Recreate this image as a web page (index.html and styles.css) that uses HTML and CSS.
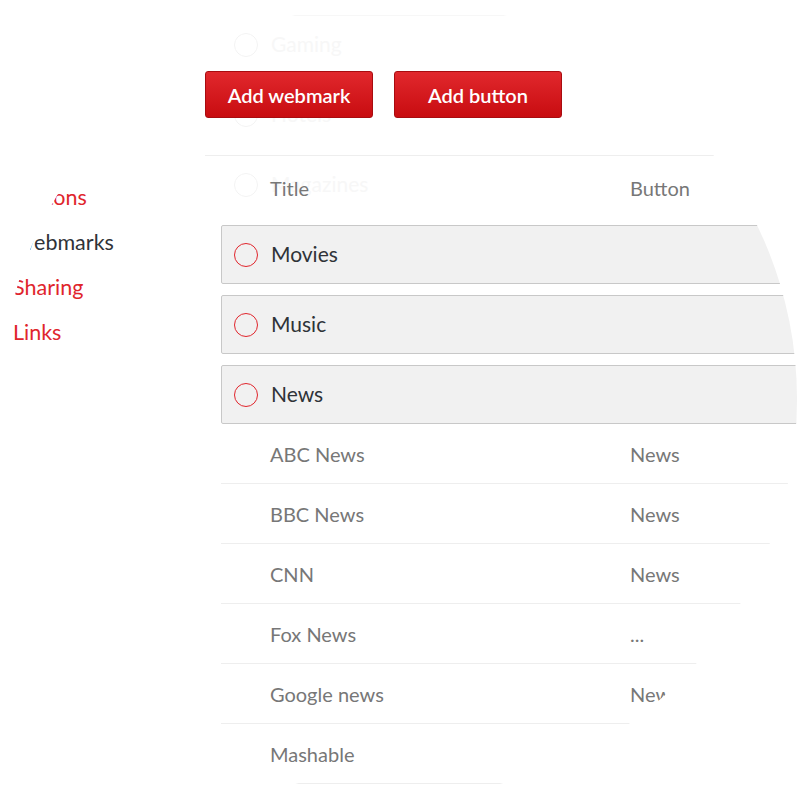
FILE: index.html
```html
<!DOCTYPE html>
<html lang="en">
<head>
    <meta charset="UTF-8">
    <meta name="viewport" content="width=device-width, initial-scale=1.0">
    <title>Webmarks</title>
    <link rel="stylesheet" href="styles.css">
</head>
<body>
    <div class="lens">
        <!-- side menu -->
        <nav class="side-nav">
            <a href="#" class="nav-link">Buttons</a>
            <a href="#" class="nav-link active">Webmarks</a>
            <a href="#" class="nav-link">Sharing</a>
            <a href="#" class="nav-link">Links</a>
        </nav>

        <div class="content">
            <div class="toolbar">
                <div class="toolbar-buttons">
                    <button class="red-btn">Add webmark</button>
                    <button class="red-btn">Add button</button>
                </div>
                <div class="table-head">
                    <span class="col-title">Title</span>
                    <span class="col-button">Button</span>
                </div>
            </div>

            <ul class="categories">
                <li class="category faded"><span class="radio"></span>Gaming</li>
                <li class="category faded"><span class="radio"></span>Hotels</li>
                <li class="category faded"><span class="radio"></span>Magazines</li>
                <li class="category"><span class="radio"></span>Movies</li>
                <li class="category"><span class="radio"></span>Music</li>
                <li class="category"><span class="radio"></span>News</li>
            </ul>

            <ul class="webmarks">
                <li class="webmark"><span class="col-title">ABC News</span><span class="col-button">News</span></li>
                <li class="webmark"><span class="col-title">BBC News</span><span class="col-button">News</span></li>
                <li class="webmark"><span class="col-title">CNN</span><span class="col-button">News</span></li>
                <li class="webmark"><span class="col-title">Fox News</span><span class="col-button">...</span></li>
                <li class="webmark"><span class="col-title">Google news</span><span class="col-button">News</span></li>
                <li class="webmark"><span class="col-title">Mashable</span><span class="col-button"></span></li>
            </ul>
        </div>
    </div>
</body>
</html>
```

FILE: styles.css
```css
* {
    margin: 0;
    padding: 0;
    box-sizing: border-box;
}

body {
    font-family: 'Source Sans Pro', Lato, 'Noto Sans', sans-serif;
    background: white;
    color: #333;
}

.lens {
    width: 798px;
    height: 798px;
    display: flex;
    overflow: hidden;
    background: white;
    clip-path: circle(398px at 399px 399px);
}

/* side menu */
.side-nav {
    width: 205px;
    flex-shrink: 0;
    padding-top: 175px;
    display: flex;
    flex-direction: column;
}

.nav-link {
    display: block;
    padding-left: 13px;
    line-height: 45px;
    font-size: 21.5px;
    color: #e0252c;
    text-decoration: none;
}

.nav-link.active {
    color: #2f3338;
}

.content {
    flex: 1;
    position: relative;
}

/* toolbar */
.toolbar {
    position: absolute;
    top: 0;
    left: 0;
    right: 0;
    z-index: 2;
}

.toolbar-buttons {
    display: flex;
    gap: 21px;
    padding-top: 71px;
    padding-bottom: 37px;
    border-bottom: 1px solid #eeeeee;
}

.red-btn {
    width: 168px;
    height: 47px;
    background: linear-gradient(to bottom, #e1282d 0%, #c80c10 100%);
    border: 1px solid #a80c10;
    border-radius: 3px;
    color: white;
    font-family: inherit;
    font-size: 20px;
    font-weight: 600;
    cursor: pointer;
}

.table-head {
    display: flex;
    padding-left: 65px;
    line-height: 64px;
    font-size: 20px;
    color: #777;
}

.col-title {
    width: 360px;
}

/* categories */
.categories {
    list-style: none;
    margin-left: 16px;
    padding-top: 15px;
}

.category {
    display: flex;
    align-items: center;
    gap: 13px;
    height: 59px;
    margin-bottom: 11px;
    padding-left: 12px;
    padding-bottom: 2px;
    background: #f1f1f1;
    border: 1px solid #c8c8c8;
    border-radius: 2px;
    font-size: 21px;
    color: #2f3338;
}

.category:last-child {
    margin-bottom: 0;
}

/* rows scrolled under the toolbar */
.category.faded {
    background: transparent;
    border-color: transparent;
    color: #f7f7f7;
}

.category.faded:first-child {
    border-top-color: #f7f7f7;
}

.category.faded .radio {
    border-color: #f3f3f3;
}

.radio {
    width: 24px;
    height: 24px;
    margin-top: 2px;
    border: 1px solid #e0252c;
    border-radius: 50%;
    background: transparent;
}

/* webmark rows */
.webmarks {
    list-style: none;
    margin-left: 16px;
}

.webmark {
    display: flex;
    align-items: center;
    height: 60px;
    padding-left: 49px;
    border-bottom: 1px solid #eeeeee;
    font-size: 20px;
    color: #777;
}
```
